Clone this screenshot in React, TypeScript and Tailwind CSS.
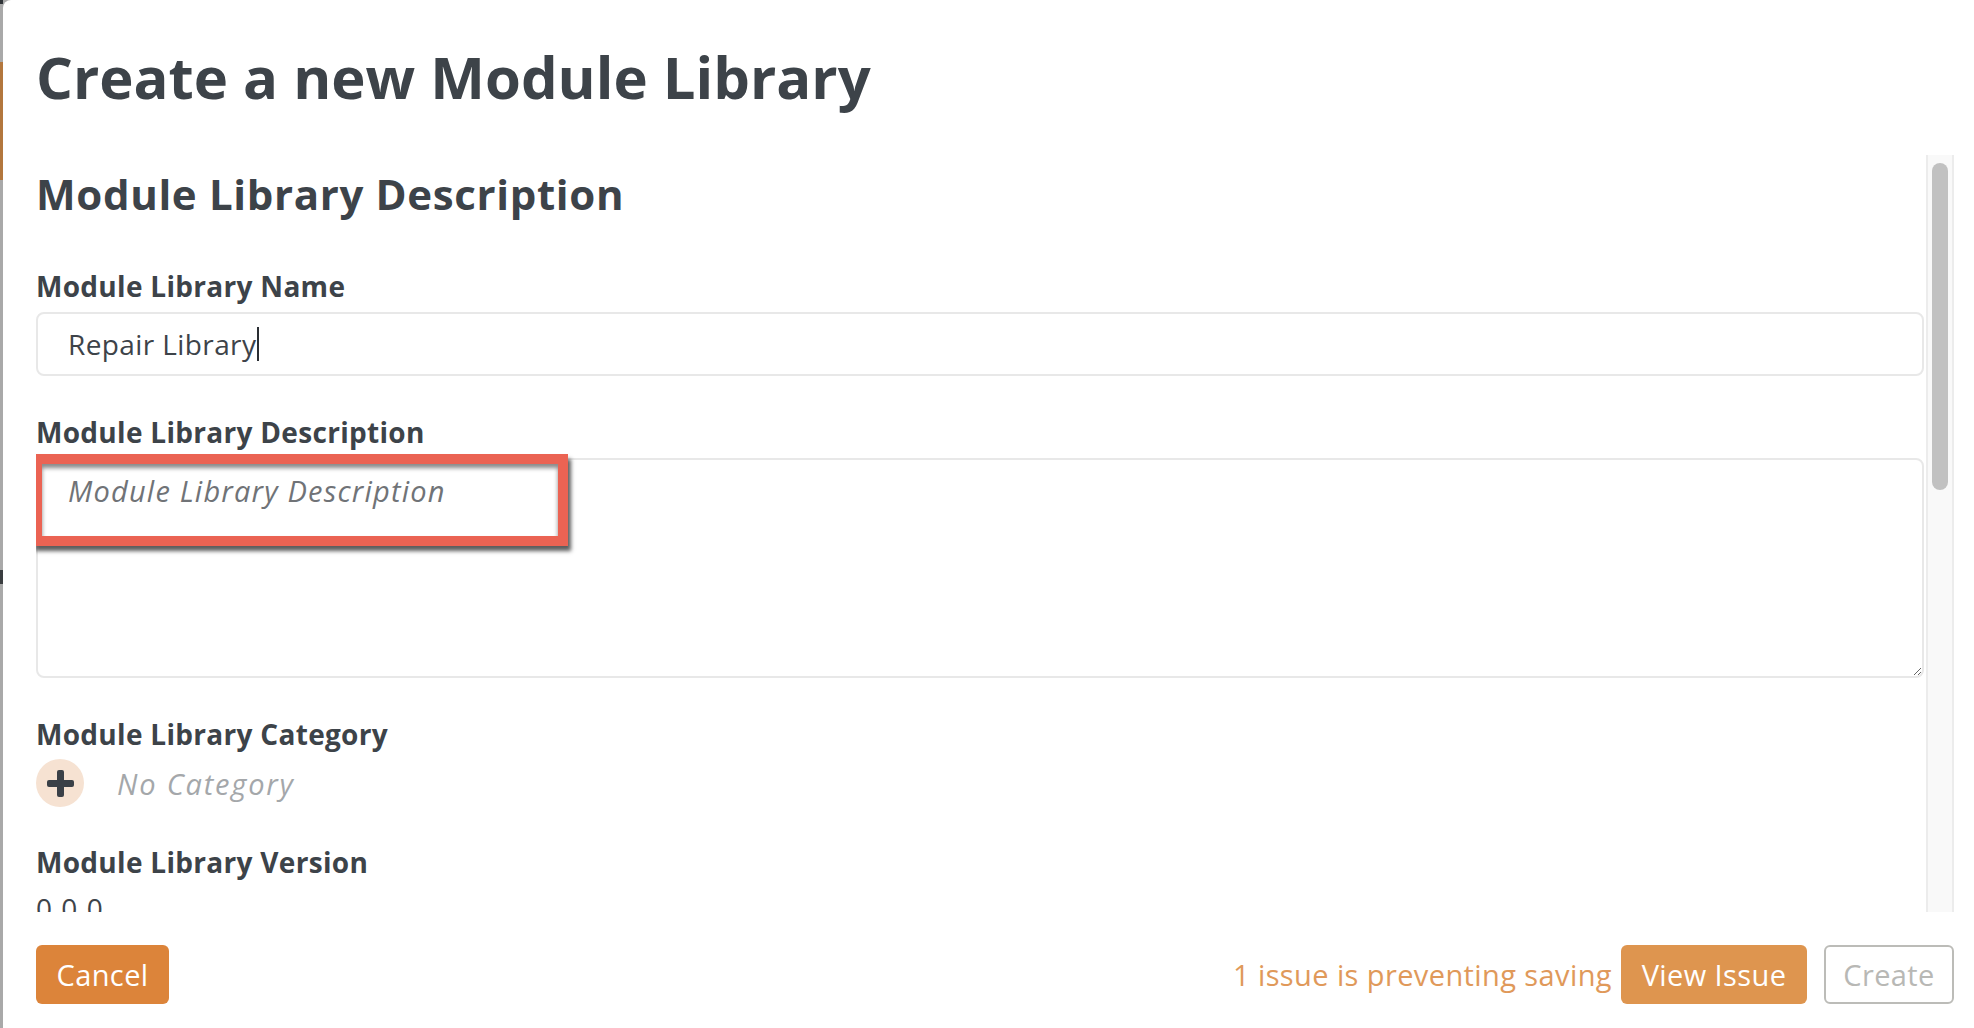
import React from "react";

const font = { fontFamily: "'Open Sans', Lato, sans-serif" };

function Label({ children }: { children: React.ReactNode }) {
  return (
    <div className="text-[28px] leading-none font-bold tracking-[0.3px] text-[#3d4349]">{children}</div>
  );
}

function PlusIcon() {
  return (
    <svg width="27" height="27" viewBox="0 0 27 27">
      <rect x="10" y="0" width="7" height="27" rx="2" fill="#3a4047" />
      <rect x="0" y="10" width="27" height="7" rx="2" fill="#3a4047" />
    </svg>
  );
}

export default function App() {
  return (
    <div className="flex h-[1028px] w-[1974px] overflow-hidden bg-[#a9a9a9]" style={font}>
      {/* sliver of the page behind the modal */}
      <div className="flex w-[3px] flex-col">
        <div className="h-[4px] bg-[#2f3337]" />
        <div className="h-[58px]" />
        <div className="h-[118px] bg-[#b3773d]" />
        <div className="h-[390px]" />
        <div className="h-[14px] bg-[#3a3d40]" />
      </div>

      <div className="flex flex-1 flex-col rounded-tl-[8px] bg-white pl-[33px] pr-[20px]">
        <div className="h-[155px] pt-[48px]">
          <h1 className="text-[58px] leading-none font-bold text-[#3d4349]">Create a new Module Library</h1>
        </div>

        <div className="flex h-[757px]">
          <div className="relative flex-1 overflow-hidden pr-[2px]">
            <h2 className="pt-[18px] text-[42px] leading-none font-bold tracking-[0.65px] text-[#3d4349]">
              Module Library Description
            </h2>

            <div className="mt-[57px]">
              <Label>Module Library Name</Label>
              <div className="mt-[12px] flex h-[64px] items-center rounded-[8px] border-2 border-[#e8e8e8] pl-[30px] text-[28px] leading-none tracking-[0.4px] text-[#3d4349]">
                <span>Repair Library</span>
                <span className="ml-[1px] h-[34px] w-[2px] bg-[#2a2e33]" />
              </div>
            </div>

            <div className="mt-[42px]">
              <Label>Module Library Description</Label>
              <textarea
                className="mt-[12px] block h-[220px] w-full rounded-[8px] border-2 border-[#e8e8e8] pl-[30px] pt-[16px] text-[29px] leading-[29px] italic tracking-[1.2px] text-[#3d4349] outline-none placeholder:text-[#707377]"
                placeholder="Module Library Description"
                style={font}
              />
            </div>

            {/* annotation highlight */}
            <div className="absolute left-[-4px] top-[299px] h-[92px] w-[536px] border-[10px] border-[#eb6353] shadow-[3px_5px_4px_rgba(40,40,40,0.75),inset_0_4px_4px_rgba(40,40,40,0.55)]" />

            <div className="mt-[42px]">
              <Label>Module Library Category</Label>
              <div className="mt-[11px] flex items-center gap-[33px]">
                <div className="flex h-[48px] w-[48px] items-center justify-center rounded-full bg-[#f6e2d2]">
                  <PlusIcon />
                </div>
                <span className="text-[29px] leading-none italic tracking-[1.8px] text-[#a4a7aa]">No Category</span>
              </div>
            </div>

            <div className="mt-[41px]">
              <Label>Module Library Version</Label>
              <div className="mt-[18px] text-[28px] leading-none tracking-[1px] text-[#3d4349]">0.0.0</div>
            </div>
          </div>

          {/* scrollbar */}
          <div className="flex w-[28px] justify-center border-x-2 border-[#ececec] bg-[#f9f9f9] pt-[8px]">
            <div className="h-[327px] w-[16px] rounded-full bg-[#c1c1c1]" />
          </div>
        </div>

        <div className="flex items-start justify-between pt-[33px]">
          <button className="h-[59px] w-[133px] rounded-[6px] bg-[#dc843a] text-[29px] tracking-[0.4px] text-white">
            Cancel
          </button>
          <div className="flex items-center">
            <span className="text-[29px] tracking-[0.4px] text-[#e0995a]">1 issue is preventing saving</span>
            <button className="ml-[9px] h-[59px] w-[186px] rounded-[6px] bg-[#de954f] text-[29px] tracking-[0.4px] text-white">
              View Issue
            </button>
            <button className="ml-[17px] h-[59px] w-[130px] rounded-[6px] border-2 border-[#bcbcb8] bg-white text-[29px] tracking-[0.4px] text-[#b8b8b5]">
              Create
            </button>
          </div>
        </div>
      </div>
    </div>
  );
}
